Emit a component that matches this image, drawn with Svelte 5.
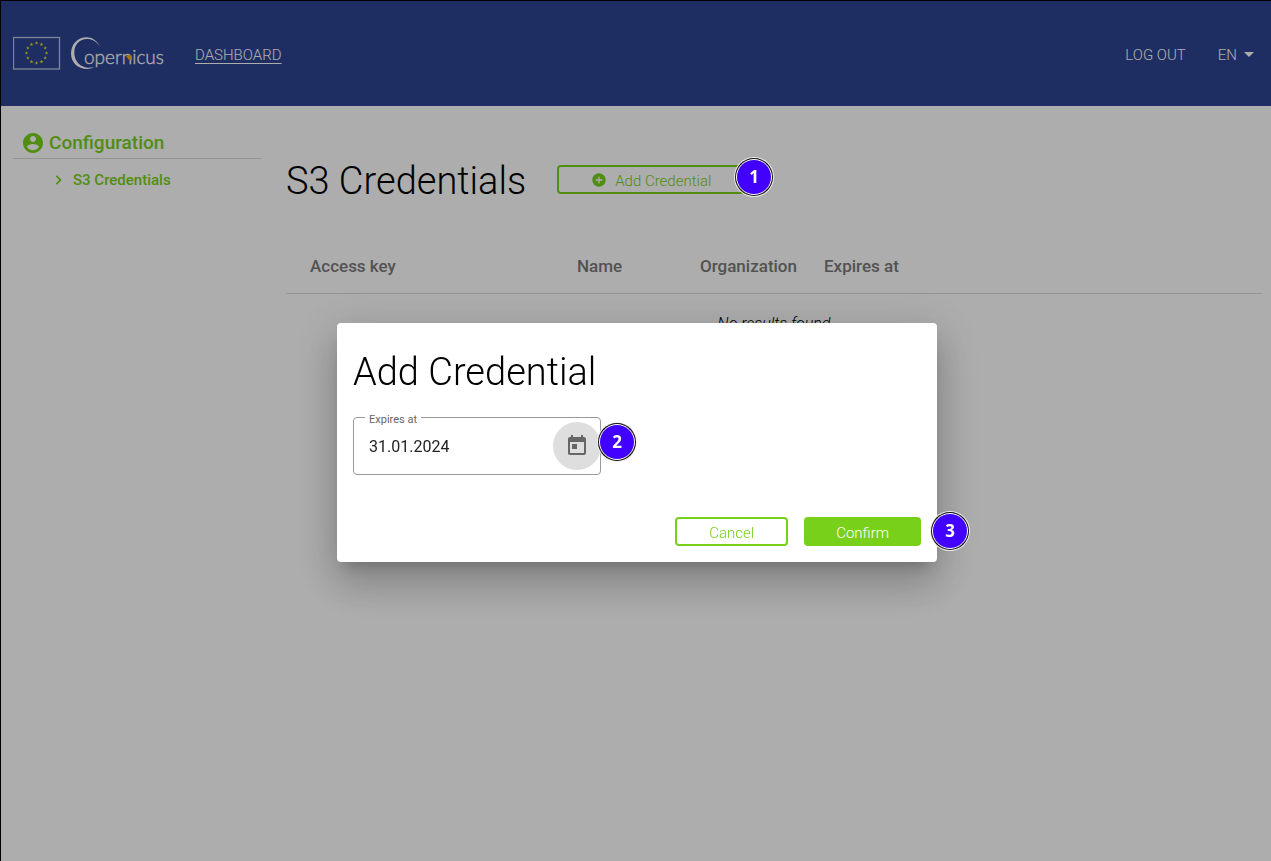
<script>
  let expires = $state('31.01.2024');
  const columns = ['Access key', 'Name', 'Organization', 'Expires at'];
  const stars = Array.from({ length: 12 }, (_, i) => {
    const a = (i * Math.PI) / 6;
    return { x: 23.5 + 10 * Math.sin(a), y: 17 - 10 * Math.cos(a) };
  });
</script>

<div class="page">
  <header>
    <a class="logo" href="#home" aria-label="Copernicus home">
      <svg width="152" height="36" viewBox="0 0 152 36">
        <rect x="0.500" y="1.500" width="46" height="31.500" fill="none" stroke="#b9c6dc" stroke-width="1.300" />
        {#each stars as s}
          <path
            d="M0-1.9 .5-.6 1.8-.6 .8.3 1.1 1.6 0 .8-1.1 1.6-.8.3-1.8-.6-.5-.6Z"
            fill="#dfe21c"
            transform="translate({s.x} {s.y})"
          />
        {/each}
        <path
          d="M87.500 11C84 4.500 79 1.300 73.500 1.300 64.500 1.300 58 8.500 58 17.500 58 26.500 65 33 74 33 77 33 80 32 81.500 30.800 79 31.600 77.500 31.700 76 31.700 67.500 31.700 61.300 25.500 61.300 16.500 61.300 8.500 66.500 3 74 3 79.500 3 83.500 5.500 87.500 11Z"
          fill="#fff"
        />
        <text x="71" y="28" class="wordmark">opernicus</text>
        <path d="M113 20 116.500 18.500 119 20 119 24 115.500 23.500Z" fill="#f0ae20" />
      </svg>
    </a>
    <nav>
      <a class="current" href="#dashboard">DASHBOARD</a>
      <a class="logout" href="#logout">LOG OUT</a>
      <button class="lang">
        EN
        <svg width="10" height="5" viewBox="0 0 10 5"><path d="M0 0H10L5 5Z" fill="#fff" /></svg>
      </button>
    </nav>
  </header>

  <div class="body">
    <aside>
      <h2>
        <svg width="24" height="24" viewBox="0 0 24 24" fill="currentColor">
          <path d="M12 2C6.480 2 2 6.480 2 12s4.480 10 10 10 10-4.480 10-10S17.520 2 12 2zm0 3c1.660 0 3 1.340 3 3s-1.340 3-3 3-3-1.340-3-3 1.340-3 3-3zm0 14.200c-2.500 0-4.710-1.280-6-3.220.03-1.990 4-3.080 6-3.080 1.990 0 5.970 1.090 6 3.080-1.290 1.940-3.500 3.220-6 3.220z" />
        </svg>
        <span>Configuration</span>
      </h2>
      <a href="#s3">
        <svg width="16" height="16" viewBox="0 0 24 24" fill="currentColor">
          <path d="M9 5 7.300 6.700 12.600 12l-5.300 5.300L9 19l7-7z" />
        </svg>
        S3 Credentials
      </a>
    </aside>

    <main>
      <div class="title">
        <h1>S3 Credentials</h1>
        <div class="anchor">
          <button class="btn outline">
            <svg width="16" height="16" viewBox="0 0 24 24" fill="currentColor">
              <path d="M12 2C6.480 2 2 6.480 2 12s4.480 10 10 10 10-4.480 10-10S17.520 2 12 2zm5 11h-4v4h-2v-4H7v-2h4V7h2v4h4v2z" />
            </svg>
            <span>Add Credential</span>
          </button>
          <span class="badge one">1</span>
        </div>
      </div>
      <table>
        <thead>
          <tr>
            {#each columns as c}<th>{c}</th>{/each}
          </tr>
        </thead>
        <tbody>
          <tr><td colspan="4">No results found</td></tr>
        </tbody>
      </table>
    </main>
  </div>

  <div class="overlay">
    <div class="dialog" role="dialog" aria-modal="true" aria-labelledby="dialog-title">
      <h1 id="dialog-title">Add Credential</h1>
      <div class="field">
        <label for="expires">Expires at</label>
        <input id="expires" type="text" bind:value={expires} />
        <button class="pick" aria-label="Choose date">
          <svg width="24" height="24" viewBox="0 0 24 24" fill="#666">
            <path d="M19 3h-1V1h-2v2H8V1H6v2H5c-1.110 0-1.990.9-1.990 2L3 19c0 1.100.89 2 2 2h14c1.100 0 2-.9 2-2V5c0-1.100-.9-2-2-2zm0 16H5V8h14v11zM7 10h5v5H7z" />
          </svg>
        </button>
        <span class="badge two">2</span>
      </div>
      <div class="actions">
        <button class="btn outline"><span>Cancel</span></button>
        <div class="anchor">
          <button class="btn solid"><span>Confirm</span></button>
          <span class="badge three">3</span>
        </div>
      </div>
    </div>
  </div>
</div>

<style>
  :global(body) {
    margin: 0;
    background: #fff;
  }
  .page {
    box-sizing: border-box;
    min-height: 100vh;
    border-top: 1px solid #000;
    border-left: 1px solid #000;
    font: 300 16px/24px Roboto, sans-serif;
    color: #000;
  }
  button,
  input {
    font: inherit;
  }
  h1,
  h2 {
    margin: 0;
  }
  h1 {
    padding-top: 3px;
    font-size: 38px;
    font-weight: 300;
    line-height: 48px;
  }
  header {
    display: flex;
    align-items: center;
    gap: 30px;
    height: 105px;
    padding: 0 17px 0 12px;
    background: #2e4491;
    color: #fff;
  }
  .logo {
    display: flex;
  }
  .wordmark {
    font: 300 19px Lato, sans-serif;
    fill: #fff;
    stroke: #fff;
    stroke-width: 0.3px;
  }
  nav {
    display: flex;
    flex: 1;
    align-items: center;
    padding-top: 2px;
    font-size: 15px;
  }
  nav a {
    color: #fff;
    text-decoration: none;
  }
  nav .current {
    text-decoration: underline;
    text-underline-offset: 3px;
  }
  .logout {
    margin-left: auto;
  }
  .lang {
    display: flex;
    align-items: center;
    gap: 7px;
    margin-left: 32px;
    padding: 0;
    border: 0;
    background: none;
    color: #fff;
  }
  .body {
    display: flex;
    gap: 24px;
    padding: 24px 9px 0 12px;
  }
  aside {
    flex: none;
    width: 249px;
    color: #78d01a;
  }
  h2 {
    display: flex;
    align-items: center;
    gap: 4px;
    padding: 0 8px 3px;
    border-bottom: 1px solid #dbdbdb;
    font-size: 19px;
    font-weight: 500;
    line-height: 24px;
  }
  h2 span {
    padding-top: 1px;
  }
  aside a {
    display: flex;
    align-items: center;
    gap: 6px;
    padding: 9px 0 0 38px;
    color: inherit;
    font-size: 15px;
    font-weight: 500;
    text-decoration: none;
  }
  main {
    flex: 1;
    padding-top: 24px;
  }
  .title {
    display: flex;
    align-items: center;
    gap: 31px;
  }
  .anchor {
    position: relative;
    display: flex;
  }
  .btn {
    box-sizing: border-box;
    display: flex;
    align-items: center;
    justify-content: center;
    gap: 8px;
    height: 29px;
    padding: 0 32px;
    border: 2px solid #78d01a;
    border-radius: 4px;
    font-size: 15px;
    white-space: nowrap;
  }
  .btn span {
    padding-top: 2px;
  }
  .outline {
    background: #fff;
    color: #78d01a;
  }
  .solid {
    padding: 0 30px;
    background: #78d01a;
    color: #fff;
  }
  table {
    width: 100%;
    margin-top: 34px;
    border-collapse: collapse;
    table-layout: fixed;
  }
  th {
    height: 54px;
    padding: 0 0 0 24px;
    border-bottom: 1px solid #dbdbdb;
    color: #7a7a7a;
    font-size: 17px;
    font-weight: 500;
    text-align: left;
  }
  th:nth-child(1) {
    width: 243px;
  }
  th:nth-child(2) {
    width: 99px;
  }
  th:nth-child(3) {
    width: 100px;
  }
  td {
    padding: 18px 0;
    font-style: italic;
    text-align: center;
  }
  .overlay {
    box-sizing: border-box;
    position: fixed;
    inset: 0;
    display: flex;
    align-items: center;
    justify-content: center;
    padding: 24px 0 0 3px;
    background: rgba(0, 0, 0, 0.32);
    z-index: 1;
  }
  .dialog {
    box-sizing: border-box;
    width: 600px;
    max-width: 90%;
    padding: 22px 16px 16px;
    border-radius: 4px;
    background: #fff;
    box-shadow:
      0 11px 15px -7px rgba(0, 0, 0, 0.2),
      0 24px 38px 3px rgba(0, 0, 0, 0.14),
      0 9px 46px 8px rgba(0, 0, 0, 0.12);
  }
  .field {
    box-sizing: border-box;
    position: relative;
    display: flex;
    align-items: center;
    width: 248px;
    height: 58px;
    margin-top: 21px;
    border: 1px solid #999;
    border-radius: 4px;
  }
  .field label {
    position: absolute;
    top: -6px;
    left: 11px;
    padding: 0 4px;
    background: #fff;
    color: #666;
    font-size: 11px;
    line-height: 16px;
    font-weight: 400;
  }
  .field input {
    flex: 1;
    min-width: 0;
    padding: 2px 0 0 15px;
    border: 0;
    outline: 0;
    background: none;
    color: #222;
    font-weight: 400;
  }
  .pick {
    display: grid;
    place-items: center;
    width: 48px;
    height: 48px;
    margin-right: -1px;
    padding: 0;
    border: 0;
    border-radius: 50%;
    background: #dedede;
  }
  .actions {
    display: flex;
    justify-content: flex-end;
    gap: 16px;
    margin-top: 42px;
  }
  .badge {
    box-sizing: border-box;
    position: absolute;
    z-index: 2;
    display: grid;
    place-items: center;
    width: 36px;
    height: 36px;
    border: 1px solid #fff;
    border-radius: 50%;
    background: #4100ff;
    box-shadow:
      0 0 0 1px #111,
      0 0 0 2px #eee;
    color: #fff;
    font: 700 17px/24px "Open Sans", sans-serif;
  }
  .one {
    top: -6px;
    left: 179px;
  }
  .two {
    top: 6px;
    right: -35px;
  }
  .three {
    top: -4px;
    right: -47px;
  }
</style>
